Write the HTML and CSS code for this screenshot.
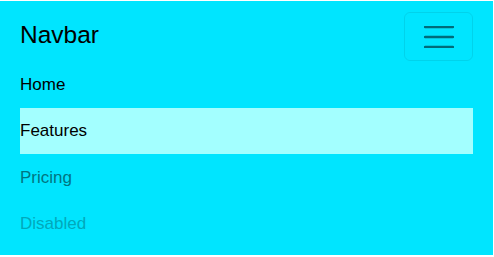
FILE: index.html
```html
<!DOCTYPE html>
<html>
<head>
<meta charset="utf-8">
<link rel="stylesheet" href="styles.css">
</head>
<body>
<nav class="navbar">
  <div class="navbar-head">
    <a class="brand" href="#">Navbar</a>
    <button class="toggler" type="button" aria-label="Toggle navigation">
      <svg width="30" height="22" viewBox="0 0 30 22">
        <path d="M1 1H29M1 11H29M1 21H29" stroke="#006b7a" stroke-width="2.3" stroke-linecap="round" fill="none"/>
      </svg>
    </button>
  </div>
  <ul class="nav">
    <li><a class="link link-home" href="#">Home</a></li>
    <li><a class="link link-active" href="#">Features</a></li>
    <li><a class="link link-muted" href="#">Pricing</a></li>
    <li><a class="link link-disabled" href="#">Disabled</a></li>
  </ul>
</nav>
</body>
</html>
```
FILE: styles.css
```css
html, body {
  margin: 0;
  padding: 0;
  background: #ffffff;
}
body {
  font-family: "Liberation Sans", Arial, Helvetica, sans-serif;
  padding-top: 1px;
}
.navbar {
  box-sizing: border-box;
  width: 493px;
  height: 254px;
  background: #00e5ff;
  padding: 0 20px 8px 20px;
}
.navbar-head {
  display: flex;
  justify-content: space-between;
  align-items: flex-start;
  padding-top: 11px;
  height: 60px;
  box-sizing: border-box;
}
.brand {
  font-size: 24.5px;
  line-height: 30px;
  margin-top: 8px;
  color: #000;
  text-decoration: none;
}
.toggler {
  box-sizing: border-box;
  width: 69px;
  height: 49px;
  padding: 0;
  border: 1px solid rgba(0, 0, 0, 0.08);
  border-radius: 6px;
  background: transparent;
  display: flex;
  align-items: center;
  justify-content: center;
}
.toggler svg {
  display: block;
}
.nav {
  list-style: none;
  margin: 0;
  padding: 0;
}
.link {
  display: block;
  font-size: 17px;
  line-height: 26px;
  padding: 10.5px 0 10px 0;
  text-decoration: none;
}
.link-home {
  color: #000;
}
.link-active {
  color: #000;
  background: #a3ffff;
}
.link-muted {
  color: #007582;
}
.link-disabled {
  color: #00a9bb;
}
```
